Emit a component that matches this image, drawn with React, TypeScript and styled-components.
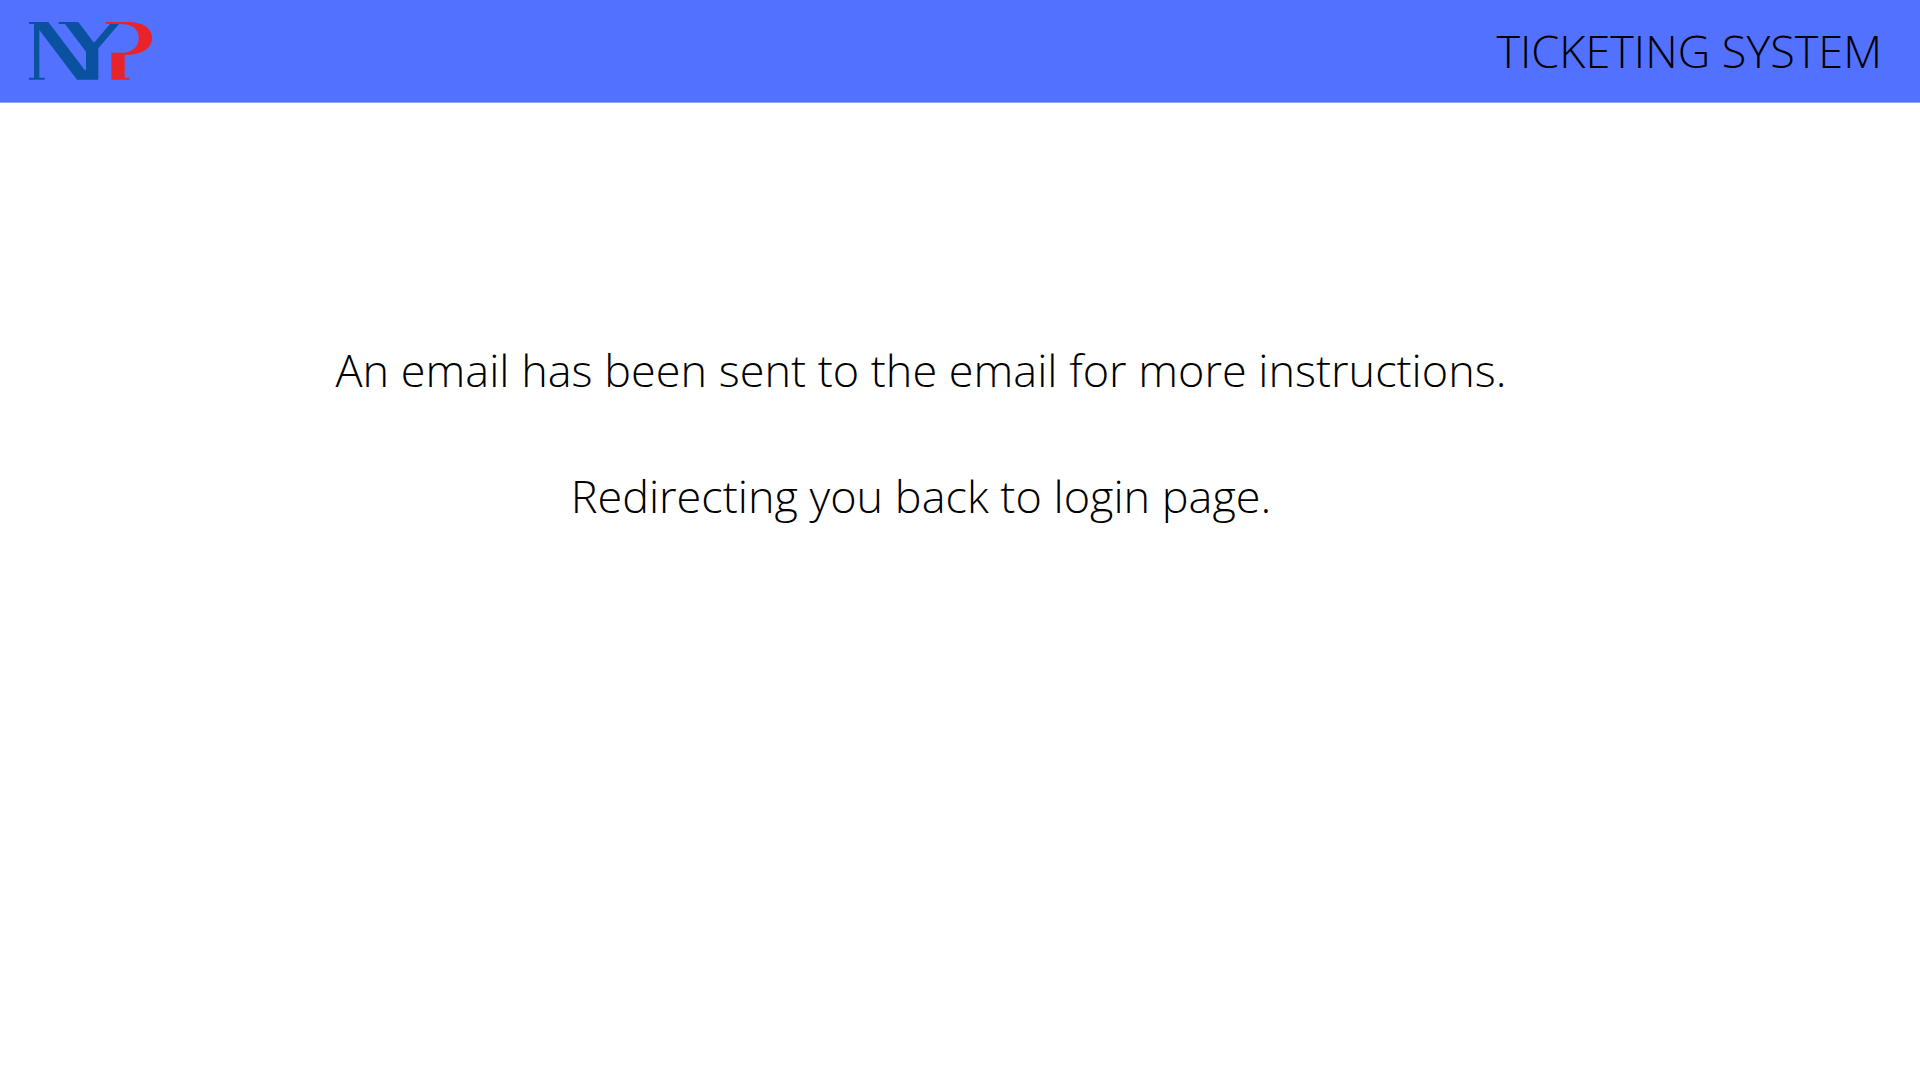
import React from "react";
import styled, { createGlobalStyle } from "styled-components";

const GlobalStyle = createGlobalStyle`
  body {
    margin: 0;
    background: #ffffff;
    color: #000000;
    font-family: "Open Sans", "Noto Sans", sans-serif;
    font-weight: 300;
  }
`;

const Header = styled.header`
  display: flex;
  align-items: center;
  justify-content: space-between;
  min-height: 102px;
  padding: 0 38px 0 28px;
  background: #5271ff;
  border-bottom: 1px solid #8fa3ff;
  background-clip: padding-box;
`;

const Logo = styled.svg`
  display: block;
  width: 125px;
  height: 60px;
`;

const Title = styled.h1`
  margin: 0;
  font-size: 45px;
  line-height: 66px;
  font-weight: 300;
`;

const Message = styled.main`
  display: flex;
  flex-direction: column;
  align-items: center;
  gap: 60px;
  padding: 234px 78px 0 0;
  text-align: center;
`;

const Line = styled.p`
  margin: 0;
  font-size: 45px;
  line-height: 66px;
`;

export default function App() {
  return (
    <>
      <GlobalStyle />
      <Header>
        <Logo viewBox="24 33 375 180" role="img" aria-label="NYP">
          <path
            fill="#0a529f"
            d="M27 36H85L194 180H198V125L135 42H116V36H175L222 98L270 42L297 42L235 115V209H171L58 60V203H74V209H27V203H42V42H27Z"
          />
          <path
            fill="#e8242a"
            d="M258 36H325C370 36 396 55 396 84C396 115 368 133 314 136V203H329V209H274V128H312C340 126 356 108 356 84C356 58 340 42 300 42H258Z"
          />
        </Logo>
        <Title>TICKETING SYSTEM</Title>
      </Header>
      <Message>
        <Line>An email has been sent to the email for more instructions.</Line>
        <Line>Redirecting you back to login page.</Line>
      </Message>
    </>
  );
}
